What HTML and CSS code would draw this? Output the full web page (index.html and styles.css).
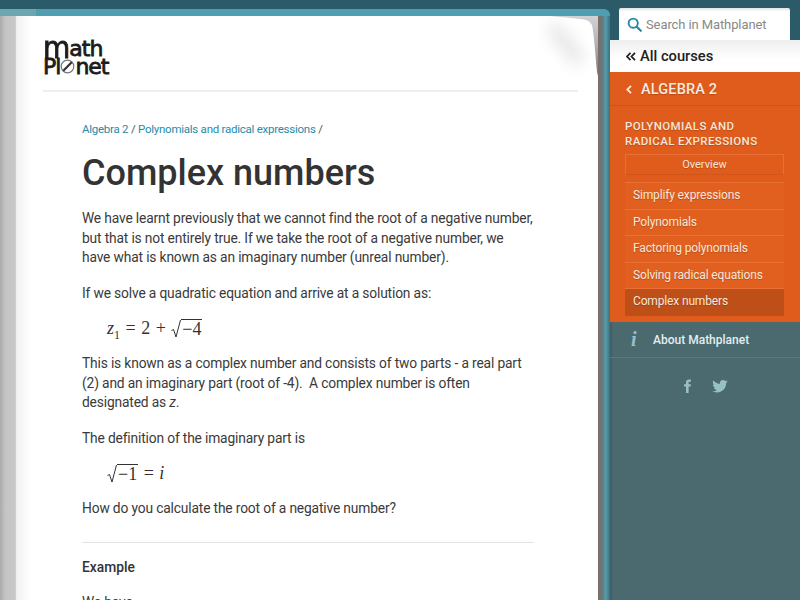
FILE: index.html
```html
<!DOCTYPE html>
<html lang="en">
<head>
<meta charset="utf-8">
<title>Complex numbers</title>
<link rel="stylesheet" href="styles.css">
</head>
<body>
<div class="app">
  <div class="book">
    <div class="band"></div>
    <div class="sheets">
      <div class="spine"></div>
      <main class="page">
        <svg class="curl" width="98" height="100" viewBox="-30 0 98 100" aria-hidden="true">
          <defs>
            <filter id="soft" x="-100%" y="-100%" width="300%" height="300%"><feGaussianBlur stdDeviation="8"/></filter>
            <linearGradient id="under" x1="0" y1="0" x2="0" y2="1">
              <stop offset="0" stop-color="#d2d2d6"/>
              <stop offset=".45" stop-color="#b4b4b4"/>
              <stop offset="1" stop-color="#7a7876"/>
            </linearGradient>
          </defs>
          <path d="M22 10 L50 46" stroke="#e4e4e4" stroke-width="14" fill="none" filter="url(#soft)"/>
          <path d="M20 0 H68 V60 L67 56 C65 35 64 18 62 9 C60 6 58 4 54 3.500 C44 2 30 1 20 0Z" fill="url(#under)"/>
        </svg>
        <header class="logo-row">
          <div class="logo">
            <div class="logo-line"><span class="logo-m">M</span>ath</div>
            <div class="logo-line">Pl<svg class="planet" width="15" height="15" viewBox="0 0 15 15" aria-hidden="true"><circle cx="7.500" cy="7.500" r="6.300" fill="#fff" stroke="#777" stroke-width="1.200"/><path d="M3.300 11.700 L11.700 3.300" stroke="#333" stroke-width="2.200"/></svg>net</div>
          </div>
        </header>
        <article class="content">
          <nav class="crumbs"><a>Algebra 2</a> / <a>Polynomials and radical expressions</a> /</nav>
          <h1>Complex numbers</h1>
          <p>We have learnt previously that we cannot find the root of a negative number, but that is not entirely true. If we take the root of a negative number, we have what is known as an imaginary number (unreal number).</p>
          <p>If we solve a quadratic equation and arrive at a solution as:</p>
          <div class="math math-a"><i>z</i><sub>1</sub> = 2 + <span class="root"><svg class="radical" width="10" height="20" viewBox="0 0 10 20" aria-hidden="true"><path d="M0.500 11.500 L2.500 10.500 L5 18 L9.500 1" fill="none" stroke="#333" stroke-width="1"/></svg><span class="under">−4</span></span></div>
          <p>This is known as a complex number and consists of two parts - a real part (2) and an imaginary part (root of -4).&nbsp; A complex number is often designated as <em>z</em>.</p>
          <p>The definition of the imaginary part is</p>
          <div class="math math-b"><span class="root"><svg class="radical" width="10" height="20" viewBox="0 0 10 20" aria-hidden="true"><path d="M0.500 11.500 L2.500 10.500 L5 18 L9.500 1" fill="none" stroke="#333" stroke-width="1"/></svg><span class="under">−1</span></span> = <i>i</i></div>
          <p>How do you calculate the root of a negative number?</p>
          <hr class="rule">
          <h4>Example</h4>
          <p>We have</p>
        </article>
      </main>
      <div class="edge"></div>
    </div>
  </div>
  <aside class="side">
    <div class="search">
      <svg width="15" height="15" viewBox="0 0 15 15" aria-hidden="true"><circle cx="6.200" cy="6.200" r="4.600" fill="none" stroke="#2487a5" stroke-width="1.900"/><path d="M9.700 9.700 L13.800 13.800" stroke="#2487a5" stroke-width="2.200" stroke-linecap="round"/></svg>
      <span>Search in Mathplanet</span>
    </div>
    <a class="all"><svg class="chev" width="10" height="9" viewBox="0 0 10 9" aria-hidden="true"><path d="M4.500 .8 L1 4.500 L4.500 8.200 M9 .8 L5.500 4.500 L9 8.200" fill="none" stroke="#222" stroke-width="1.800"/></svg>All courses</a>
    <div class="orange">
      <a class="course"><svg class="chev-s" width="6" height="9" viewBox="0 0 6 9" aria-hidden="true"><path d="M5 .8 L1.300 4.500 L5 8.200" fill="none" stroke="#fbeadf" stroke-width="1.800"/></svg>ALGEBRA 2</a>
      <div class="section">
        <div class="section-title">POLYNOMIALS AND RADICAL EXPRESSIONS</div>
        <a class="overview">Overview</a>
        <ul class="menu">
          <li>Simplify expressions</li>
          <li>Polynomials</li>
          <li>Factoring polynomials</li>
          <li>Solving radical equations</li>
          <li class="active">Complex numbers</li>
        </ul>
      </div>
    </div>
    <a class="about"><i class="info">i</i><span>About Mathplanet</span></a>
    <div class="social">
      <svg width="9" height="14" viewBox="0 0 9 14" aria-hidden="true"><path d="M3 14V7.600H1V5.300h2V3.600C3 1.400 4.200.4 6 .4h1.900v2.300H6.600c-.8 0-1 .4-1 1v1.600h2.300l-.3 2.300h-2V14z" fill="#98c0c6"/></svg>
      <svg width="16" height="13" viewBox="0 0 24 20" aria-hidden="true"><path d="M24 2.400c-.9.4-1.800.7-2.800.8 1-.6 1.800-1.600 2.200-2.700-1 .6-2 1-3.100 1.200C19.300.6 18 0 16.600 0c-2.700 0-4.900 2.200-4.900 4.900 0 .4 0 .8.100 1.100C7.700 5.800 4.100 3.800 1.700.9c-.4.700-.7 1.600-.7 2.500 0 1.700.9 3.200 2.200 4.100-.8 0-1.600-.2-2.200-.6v.1c0 2.400 1.700 4.400 3.900 4.800-.4.100-.8.200-1.300.2-.3 0-.6 0-.9-.1.600 2 2.400 3.400 4.600 3.400-1.700 1.300-3.800 2.100-6.100 2.100-.4 0-.8 0-1.200-.1C2.200 18.300 4.800 19.100 7.500 19.100c9.100 0 14-7.500 14-14v-.6c1-.7 1.800-1.500 2.500-2.100z" fill="#98c0c6"/></svg>
    </div>
  </aside>
</div>
</body>
</html>
```
FILE: styles.css
```css
* { box-sizing: border-box; }
html, body { margin: 0; padding: 0; height: 100%; overflow: hidden; }
body { background: #4a6a70; font-family: Roboto, "Open Sans", sans-serif; color: #333; }
.app { display: flex; width: 800px; height: 600px; background: #4a6a70; overflow: hidden; }
.book { width: 610px; flex: none; display: flex; flex-direction: column; background: #2b5b68; padding-top: 9px; }
.band { height: 7px; flex: none; background: linear-gradient(90deg, #6da5b2 0 36px, #4f9fb0 36px); border-radius: 0 6px 0 0; }
.sheets { flex: 1; display: flex; min-height: 0; background: #4f97a8; }
.spine { width: 17px; flex: none; background: linear-gradient(90deg, #aaa, #c4c4c4 30%, #c8c8c8 90%, #fff); }
.page { width: 581px; flex: none; position: relative; background: linear-gradient(90deg, #f2f2f2, #fff 14px); padding: 0 0 0 26px; }
.curl { position: absolute; right: 0; top: 0; }
.edge { flex: 1; background: linear-gradient(90deg, #77716d 0 4px, #4a8896 5px, #5a9aa9 8px, #468392 10px, #3a7280 12px); }
.logo-row { position: relative; width: 535px; height: 76px; padding-top: 24px; border-bottom: 2px solid #eee; }
.logo { font-family: "DejaVu Sans", sans-serif; font-size: 22px; line-height: 17px; letter-spacing: -1px; color: #1c1c1c; -webkit-text-stroke: .8px #1c1c1c; }
.logo-line { display: flex; align-items: flex-end; height: 17px; }
.logo-line + .logo-line { margin-top: 1px; }
.logo-m { display: inline-block; font-size: 28px; line-height: 17px; text-transform: lowercase; transform: scaleY(1.1); transform-origin: 50% 100%; }
.planet { flex: none; margin: 0 0 1px 0; }
.content { position: relative; width: 451.500px; margin-left: 39px; padding-top: 29px; }
.crumbs { font-size: 11.500px; letter-spacing: -.25px; line-height: 16px; color: #555; }
.crumbs a { color: #268ca8; }
h1 { font-size: 36px; line-height: 40px; font-weight: 500; margin: 16px 0 16px; color: #333; }
p { font-size: 13.800px; letter-spacing: -.16px; line-height: 19.500px; margin: 0 0 16.500px; color: #3a3a3a; }
.math { font-family: "Liberation Serif", serif; font-size: 18px; line-height: 24px; color: #333; margin: -4px 0 14px 25px; white-space: nowrap; word-spacing: 1px; }
.math sub { font-size: 12px; line-height: 0; }
.root { display: inline-flex; align-items: flex-start; vertical-align: -5px; }
.radical { display: block; flex: none; }
.under { border-top: 1px solid #333; line-height: 19px; padding: 0 1px; }
.rule { border: 0; border-top: 1px solid #e4e4e4; margin: 23px 0 14px; }
h4 { font-size: 13.800px; line-height: 20px; font-weight: 500; margin: 0 0 16px; color: #333; }
.side { width: 190px; flex: none; display: flex; flex-direction: column; background: linear-gradient(90deg, #3d5c62, #4a6a70 3px); position: relative; }
.side::before { content: ""; position: absolute; left: 0; right: 0; top: 0; height: 40px; background: #2b5b68; }
.search { position: relative; margin: 8px 10px 0 9px; height: 32px; flex: none; background: #fff; border-radius: 2px 2px 0 0; display: flex; align-items: center; gap: 4px; padding-left: 8px; font-size: 13px; letter-spacing: -.1px; color: #888; box-shadow: inset 0 2px 2px rgba(0,0,0,.1); }
.all { height: 32px; flex: none; position: relative; display: flex; align-items: center; gap: 4px; padding-left: 16px; background: linear-gradient(#eee, #fff 60%); font-size: 14.700px; font-weight: 500; color: #222; }
.chev { flex: none; }
.orange { background: #e05c1c; height: 250px; flex: none; color: #f8e6da; text-shadow: 0 1px 1px rgba(0,0,0,.2); }
.course { display: flex; align-items: center; gap: 9px; height: 34px; padding-left: 16px; padding-top: 1px; border-bottom: 1px solid #c9541c; font-size: 14.500px; font-weight: 500; letter-spacing: .15px; color: #fbeadf; }
.chev-s { flex: none; }
.section { padding: 13px 16px 0 15px; }
.section-title { font-size: 11.500px; line-height: 15px; font-weight: 500; letter-spacing: .4px; margin-bottom: 5px; }
.overview { display: block; text-align: center; height: 21px; line-height: 19px; font-size: 11px; border: 1px solid #e96f34; border-bottom-color: #d1551a; }
.menu { list-style: none; margin: 7px 0 0; padding: 0; border-top: 1px solid #e96f34; }
.menu li { height: 26.500px; line-height: 25px; padding-left: 8px; font-size: 12px; letter-spacing: -.15px; border-bottom: 1px solid #e96f34; background: #e1601f; }
.menu li.active { background: #bf4f18; border-bottom: 0; }
.about { height: 36px; flex: none; display: flex; align-items: center; padding-left: 21px; border-bottom: 1px solid #557a80; font-size: 12px; font-weight: 500; color: #e4eeee; }
.info { font-family: "Liberation Serif", serif; font-weight: 700; font-size: 20px; width: 22px; color: #98c0c6; }
.social { display: flex; justify-content: center; align-items: center; gap: 20px; padding: 21px 0 0 0; margin-left: 1px; }
```
